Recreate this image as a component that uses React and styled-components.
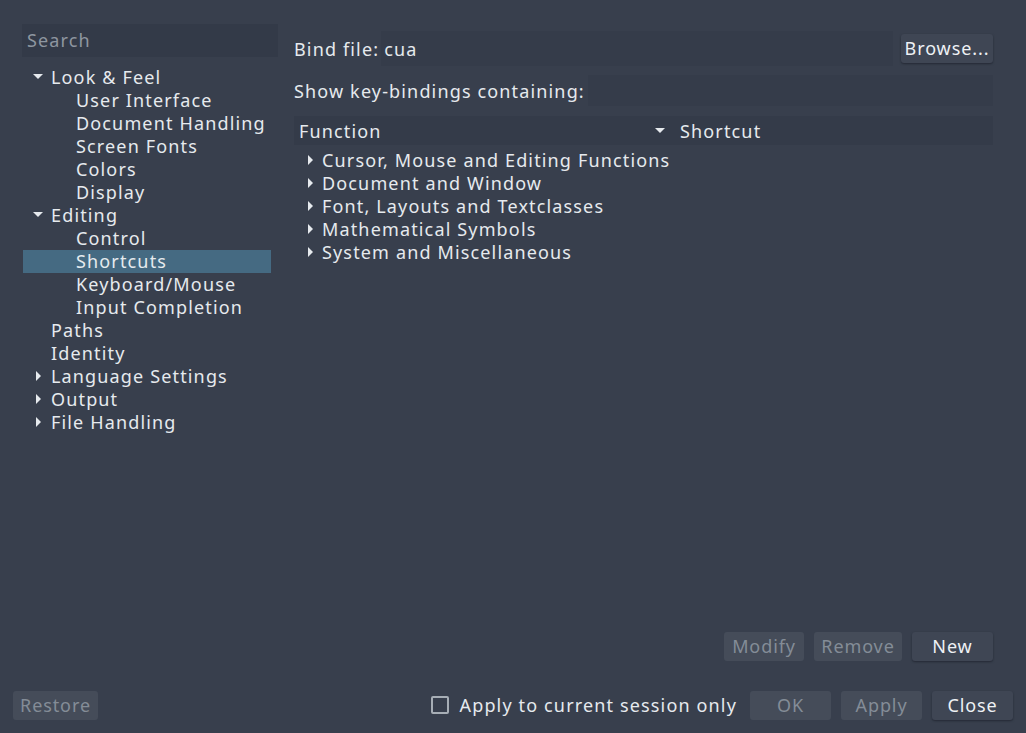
import React from "react";
import styled, { createGlobalStyle } from "styled-components";

const Global = createGlobalStyle`
  html, body { margin: 0; padding: 0; background: #383f4d; }
  body { font-family: "Noto Sans", "DejaVu Sans", sans-serif; color: #e6eaee; }
  * { box-sizing: border-box; }
`;

const Window = styled.div`
  width: 1026px;
  height: 733px;
  background: #383f4d;
  display: flex;
  flex-direction: column;
  font-size: 18px;
  letter-spacing: 1.15px;
  line-height: 22px;
  overflow: hidden;
`;

const Main = styled.div`
  flex: 1;
  display: flex;
  gap: 16px;
  padding: 24px 33px 0 22px;
  min-height: 0;
`;

const Sidebar = styled.div`
  width: 256px;
  display: flex;
  flex-direction: column;
  gap: 9px;
`;

const SearchBox = styled.div`
  height: 33px;
  background: #333a48;
  color: #8e96a0;
  padding: 0 5px 2px;
  display: flex;
  align-items: center;
`;

const Tree = styled.div`
  display: flex;
  flex-direction: column;
`;

const TreeRow = styled.div`
  height: 23px;
  width: 248px;
  margin-left: 1px;
  display: flex;
  align-items: center;
  padding-left: ${(p) => p.$indent}px;
  padding-bottom: 1px;
  background: ${(p) => (p.$selected ? "#456a82" : "transparent")};
  white-space: nowrap;
`;

const Arrow = styled.span`
  width: 14px;
  display: inline-flex;
  justify-content: center;
  align-items: center;
  margin-right: ${(p) => p.$gap ?? 6}px;
  svg { display: block; }
`;

const Content = styled.div`
  flex: 1;
  display: flex;
  flex-direction: column;
`;

const FormRow = styled.div`
  display: flex;
  align-items: center;
  height: ${(p) => p.$h}px;
  margin-top: ${(p) => p.$mt || 0}px;
`;

const Label = styled.span`
  white-space: nowrap;
  margin-right: ${(p) => p.$mr ?? 3}px;
`;

const Field = styled.div`
  flex: 1;
  align-self: stretch;
  background: #353c4a;
  display: flex;
  align-items: center;
  padding: 0 3px;
  margin-right: ${(p) => p.$mr || 0}px;
`;

const Button = styled.div`
  height: 29px;
  width: ${(p) => p.$w}px;
  border-radius: 3px;
  display: flex;
  align-items: center;
  justify-content: center;
  padding-bottom: 2px;
  letter-spacing: 0.9px;
  background: ${(p) => (p.$disabled ? "#454c59" : "#3f4654")};
  color: ${(p) => (p.$disabled ? "#848c97" : "#eef1f4")};
  box-shadow: ${(p) => (p.$disabled ? "none" : "0 1px 2px rgba(20,24,32,0.55)")};
  flex-shrink: 0;
`;

const Header = styled.div`
  height: 29px;
  margin-top: 10px;
  padding-top: 1px;
  background: #343b49;
  display: flex;
  align-items: center;
`;

const HeaderCell = styled.div`
  width: ${(p) => p.$w}px;
  padding-left: ${(p) => p.$pl}px;
  display: flex;
  align-items: center;
  justify-content: space-between;
  padding-right: ${(p) => p.$pr || 0}px;
`;

const Groups = styled.div`
  display: flex;
  flex-direction: column;
  margin-top: 3px;
`;

const GroupRow = styled.div`
  height: 23px;
  display: flex;
  align-items: center;
  padding-left: 9px;
  white-space: nowrap;
`;

const Spacer = styled.div`
  flex: 1;
`;

const ButtonRow = styled.div`
  display: flex;
  justify-content: flex-end;
  gap: ${(p) => p.$gap || 10}px;
`;

const Footer = styled.div`
  display: flex;
  align-items: center;
  padding: 0 13px;
  margin: 30px 0 13px;
  height: 29px;
`;

const CheckLabel = styled.label`
  display: flex;
  align-items: center;
  margin-right: 13px;
  white-space: nowrap;
  padding-bottom: 2px;
`;

const Box = styled.span`
  width: 18px;
  height: 18px;
  border: 2px solid #a7aeb6;
  border-radius: 2px;
  margin-right: 11px;
`;

const Down = () => (
  <svg width="10" height="6" viewBox="0 0 10 6"><path d="M0 0 L10 0 L5 5 Z" fill="#e6eaee" /></svg>
);
const Right = () => (
  <svg width="5" height="10" viewBox="0 0 5 10"><path d="M0 0 L5 5 L0 10 Z" fill="#e6eaee" /></svg>
);

const tree = [
  { t: "Look & Feel", a: "down" },
  { t: "User Interface", c: true },
  { t: "Document Handling", c: true },
  { t: "Screen Fonts", c: true },
  { t: "Colors", c: true },
  { t: "Display", c: true },
  { t: "Editing", a: "down" },
  { t: "Control", c: true },
  { t: "Shortcuts", c: true, s: true },
  { t: "Keyboard/Mouse", c: true },
  { t: "Input Completion", c: true },
  { t: "Paths" },
  { t: "Identity" },
  { t: "Language Settings", a: "right" },
  { t: "Output", a: "right" },
  { t: "File Handling", a: "right" },
];

const groups = [
  "Cursor, Mouse and Editing Functions",
  "Document and Window",
  "Font, Layouts and Textclasses",
  "Mathematical Symbols",
  "System and Miscellaneous",
];

export default function App() {
  return (
    <Window>
      <Global />
      <Main>
        <Sidebar>
          <SearchBox>Search</SearchBox>
          <Tree>
            {tree.map((r) => (
              <TreeRow key={r.t} $indent={r.c ? 53 : 8} $selected={r.s}>
                {!r.c && (
                  <Arrow $gap={6}>{r.a === "down" ? <Down /> : r.a === "right" ? <Right /> : null}</Arrow>
                )}
                {r.t}
              </TreeRow>
            ))}
          </Tree>
        </Sidebar>
        <Content>
          <FormRow $h={35} $mt={7}>
            <Label $mr={2}>Bind file:</Label>
            <Field $mr={8}>cua</Field>
            <Button $w={92}>Browse...</Button>
          </FormRow>
          <FormRow $h={31} $mt={9}>
            <Label $mr={3}>Show key-bindings containing:</Label>
            <Field />
          </FormRow>
          <Header>
            <HeaderCell $w={381} $pl={5} $pr={10}>
              <span>Function</span>
              <Down />
            </HeaderCell>
            <HeaderCell $w={300} $pl={5}>
              <span>Shortcut</span>
            </HeaderCell>
          </Header>
          <Groups>
            {groups.map((g) => (
              <GroupRow key={g}>
                <Arrow $gap={5}><Right /></Arrow>
                {g}
              </GroupRow>
            ))}
          </Groups>
          <Spacer />
          <ButtonRow $gap={10}>
            <Button $w={80} $disabled>Modify</Button>
            <Button $w={88} $disabled>Remove</Button>
            <Button $w={81}>New</Button>
          </ButtonRow>
        </Content>
      </Main>
      <Footer>
        <Button $w={85} $disabled>Restore</Button>
        <Spacer />
        <CheckLabel>
          <Box />
          Apply to current session only
        </CheckLabel>
        <ButtonRow $gap={10}>
          <Button $w={81} $disabled>OK</Button>
          <Button $w={81} $disabled>Apply</Button>
          <Button $w={81}>Close</Button>
        </ButtonRow>
      </Footer>
    </Window>
  );
}
